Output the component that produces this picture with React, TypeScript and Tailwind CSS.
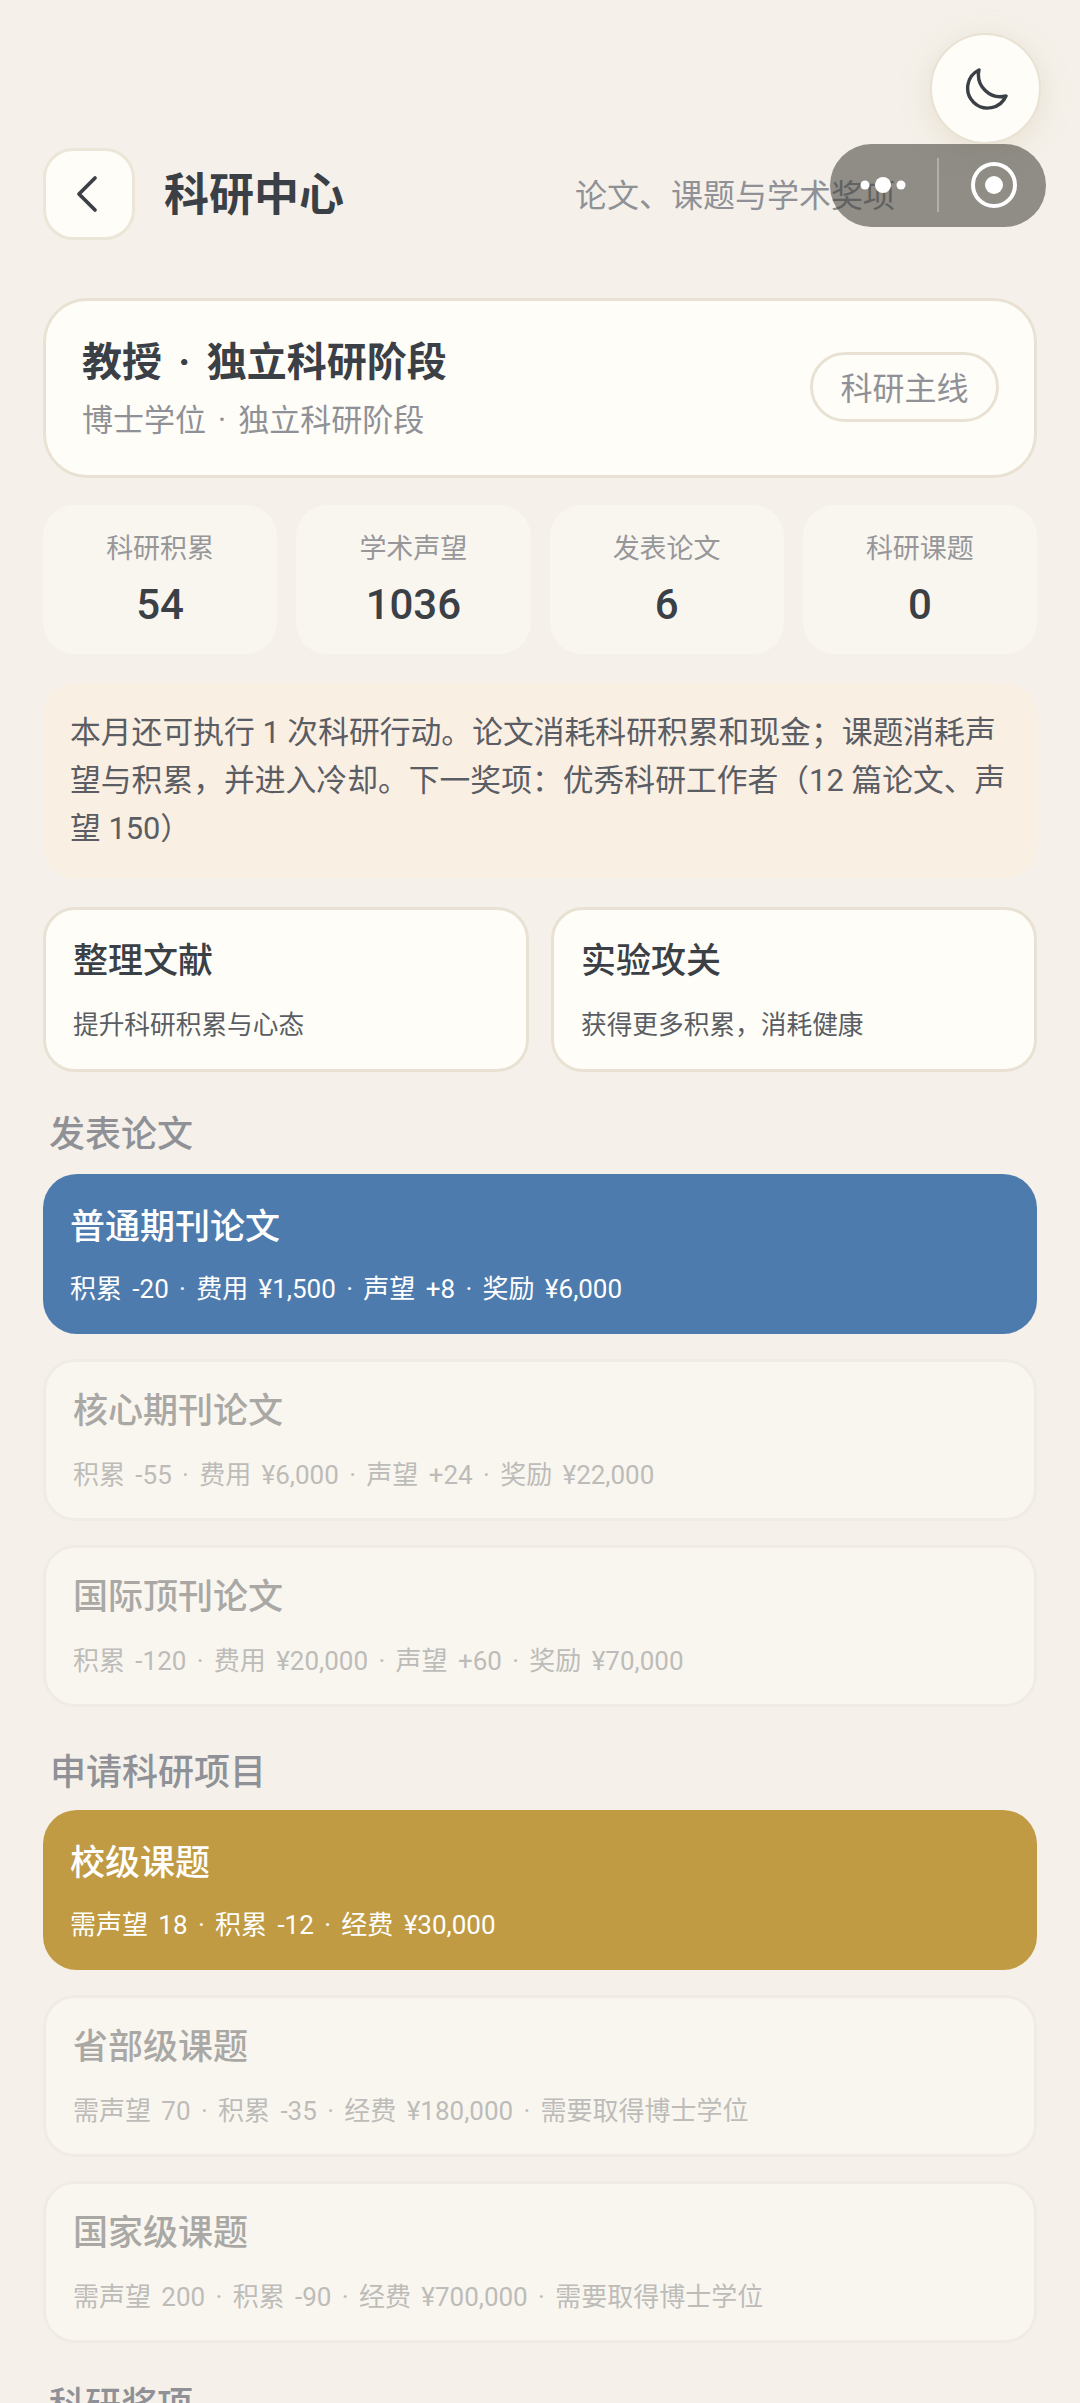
import { ChevronLeft } from "lucide-react";

const stats = [
  { label: "科研积累", value: "54" },
  { label: "学术声望", value: "1036" },
  { label: "发表论文", value: "6" },
  { label: "科研课题", value: "0" },
];

const papers = [
  { title: "核心期刊论文", meta: "积累 -55 · 费用 ¥6,000 · 声望 +24 · 奖励 ¥22,000" },
  { title: "国际顶刊论文", meta: "积累 -120 · 费用 ¥20,000 · 声望 +60 · 奖励 ¥70,000" },
];

const projects = [
  { title: "省部级课题", meta: "需声望 70 · 积累 -35 · 经费 ¥180,000 · 需要取得博士学位" },
  { title: "国家级课题", meta: "需声望 200 · 积累 -90 · 经费 ¥700,000 · 需要取得博士学位" },
];

function ActiveCard({ title, meta, color }: { title: string; meta: string; color: string }) {
  return (
    <div className={`h-[160px] rounded-[34px] px-[27px] pt-[31px] text-white ${color}`}>
      <div className="text-[35px] leading-[46px] font-medium">{title}</div>
      <div className="mt-[20px] text-[26px] leading-[36px] [word-spacing:0.15em]">{meta}</div>
    </div>
  );
}

function LockedCard({ title, meta }: { title: string; meta: string }) {
  return (
    <div className="h-[162px] rounded-[32px] border-[3px] border-[#f0ece4] bg-[#f9f6f0] px-[27px] pt-[27px]">
      <div className="text-[35px] leading-[46px] font-medium text-[#a9a8a5]">{title}</div>
      <div className="mt-[22px] text-[26px] leading-[36px] text-[#bdbcb9] [word-spacing:0.15em]">{meta}</div>
    </div>
  );
}

export default function App() {
  return (
    <div className="relative h-[2403px] overflow-hidden bg-[#f5f1ea] px-[43px] pt-[148px] font-['Roboto','Noto_Sans_CJK_SC',sans-serif] text-[#3b3f46]">
      {/* Header */}
      <div className="flex h-[92px] items-center">
        <button className="flex h-[92px] w-[92px] items-center justify-center rounded-[30px] border-[3px] border-[#ece6d9] bg-[#fefdf8]">
          <ChevronLeft className="-ml-[4px] h-[64px] w-[64px]" strokeWidth={1.4} />
        </button>
        <h1 className="ml-[29px] mt-[4px] text-[45px] font-bold">科研中心</h1>
        <p className="ml-auto mr-[142px] mt-[3px] text-[32px] text-[#8f9197]">论文、课题与学术奖项</p>
      </div>

      {/* Career */}
      <div className="mt-[58px] flex h-[180px] items-center justify-between rounded-[44px] border-[3px] border-[#e9e2d4] bg-[#fefdf8] pl-[36px] pr-[35px]">
        <div>
          <div className="mt-[3px] text-[40px] leading-[52px] font-bold [word-spacing:0.16em]">教授 · 独立科研阶段</div>
          <div className="mt-[11px] text-[31px] leading-[42px] text-[#8f9197] [word-spacing:0.14em]">博士学位 · 独立科研阶段</div>
        </div>
        <span className="-mt-[2px] flex h-[70px] w-[189px] items-center justify-center rounded-full border-[3px] border-[#e9e2d4] pt-[3px] text-[32px] text-[#8f9197]">
          科研主线
        </span>
      </div>

      {/* Stats */}
      <div className="mt-[27px] grid grid-cols-4 gap-[19px]">
        {stats.map((s) => (
          <div key={s.label} className="flex h-[149px] flex-col items-center rounded-[32px] bg-[#f9f6f0] pt-[27px]">
            <span className="text-[27px] leading-[34px] text-[#97979a]">{s.label}</span>
            <span className="mt-[13px] text-[42px] leading-[52px] font-medium">{s.value}</span>
          </div>
        ))}
      </div>

      {/* Notice */}
      <div className="mt-[29px] h-[195px] rounded-[32px] bg-[#faefe3] px-[27px] pt-[26px] text-[30.8px] leading-[48px] text-[#5a5d63]">
        本月还可执行 1 次科研行动。论文消耗科研积累和现金；课题消耗声望与积累，并进入冷却。下一奖项：优秀科研工作者（12 篇论文、声望 150）
      </div>

      {/* Actions */}
      <div className="mt-[29px] grid grid-cols-2 gap-[22px]">
        {[
          { title: "整理文献", desc: "提升科研积累与心态" },
          { title: "实验攻关", desc: "获得更多积累，消耗健康" },
        ].map((a) => (
          <div key={a.title} className="h-[165px] rounded-[32px] border-[3px] border-[#e9e2d4] bg-[#fefdf8] px-[27px] pt-[29px]">
            <div className="text-[35px] leading-[46px] font-medium">{a.title}</div>
            <div className="mt-[22px] text-[25.7px] leading-[36px] text-[#5a5d63]">{a.desc}</div>
          </div>
        ))}
      </div>

      {/* Papers */}
      <h2 className="mt-[39px] ml-[6px] text-[36px] leading-[48px] font-medium text-[#8f9197]">发表论文</h2>
      <div className="mt-[15px] flex flex-col gap-[24.5px]">
        <ActiveCard title="普通期刊论文" meta="积累 -20 · 费用 ¥1,500 · 声望 +8 · 奖励 ¥6,000" color="bg-[#4e7bae]" />
        {papers.map((p) => (
          <LockedCard key={p.title} {...p} />
        ))}
      </div>

      {/* Projects */}
      <h2 className="mt-[42px] ml-[7px] text-[36px] leading-[48px] font-medium text-[#8f9197]">申请科研项目</h2>
      <div className="mt-[13px] flex flex-col gap-[24.5px]">
        <ActiveCard title="校级课题" meta="需声望 18 · 积累 -12 · 经费 ¥30,000" color="bg-[#c09b43]" />
        {projects.map((p) => (
          <LockedCard key={p.title} {...p} />
        ))}
      </div>

      <h2 className="mt-[39px] ml-[6px] text-[36px] leading-[48px] font-medium text-[#8f9197]">科研奖项</h2>

      {/* Floating theme toggle */}
      <button className="absolute left-[930px] top-[33px] flex h-[111px] w-[111px] items-center justify-center rounded-full border-[2px] border-[#e9e2d4] bg-[#fefdf8] shadow-[0_6px_30px_rgba(190,170,130,0.25)]">
        <svg width="44" height="44" viewBox="0 0 44 44" fill="none" stroke="#3b3f46" strokeWidth="3.4" strokeLinejoin="round">
          <path d="M15 3A20 20 0 1 0 42 29A22 22 0 0 1 15 3Z" />
        </svg>
      </button>

      {/* Mini program capsule */}
      <div className="absolute left-[830px] top-[144px] h-[83px] w-[216px] rounded-full bg-[rgba(60,58,52,0.55)]">
        <svg width="216" height="83" viewBox="0 0 216 83" fill="none">
          <circle cx="35" cy="41" r="4.5" fill="#fff" />
          <circle cx="53" cy="41" r="8" fill="#fff" />
          <circle cx="71" cy="41" r="4.5" fill="#fff" />
          <line x1="108" y1="14" x2="108" y2="68" stroke="#fff" strokeOpacity="0.3" strokeWidth="2" />
          <circle cx="164" cy="41" r="21" stroke="#fff" strokeWidth="4" />
          <circle cx="164" cy="41" r="9" fill="#fff" />
        </svg>
      </div>
    </div>
  );
}
